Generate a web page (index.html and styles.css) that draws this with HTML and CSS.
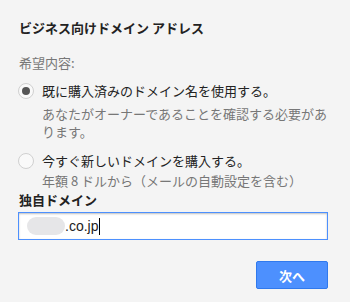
FILE: index.html
```html
<!DOCTYPE html>
<html lang="ja">
<head>
    <meta charset="UTF-8">
    <title>ビジネス向けドメイン アドレス</title>
    <link rel="stylesheet" href="styles.css">
</head>
<body>
    <div class="dialog">
        <h1 class="title">ビジネス向けドメイン アドレス</h1>
        <p class="label">希望内容:</p>
        <label class="option">
            <span class="radio checked"></span>
            <span>既に購入済みのドメイン名を使用する。</span>
        </label>
        <p class="hint">あなたがオーナーであることを確認する必要があります。</p>
        <label class="option">
            <span class="radio"></span>
            <span>今すぐ新しいドメインを購入する。</span>
        </label>
        <p class="hint last">年額 8 ドルから（メールの自動設定を含む）</p>
        <div class="field-label">独自ドメイン</div>
        <div class="input">
            <span class="blur"></span><span>.co.jp</span><span class="caret"></span>
        </div>
        <div class="actions">
            <button type="button">次へ</button>
        </div>
    </div>
</body>
</html>
```

FILE: styles.css
```css
body {
    margin: 0;
    background-color: #f4f4f4;
    font-family: "Noto Sans CJK JP", "Noto Sans", sans-serif;
    font-size: 13px;
    color: #222;
}
.dialog {
    padding: 19px 22px 0 18px;
}
.title {
    font-size: 13px;
    font-weight: bold;
    margin: 0 0 17px 1px;
    line-height: 18px;
}
.label {
    margin: 0 0 10px 1px;
    color: #777;
    line-height: 18px;
}
.option {
    display: flex;
    align-items: center;
    gap: 8px;
    line-height: 18px;
}
.radio {
    width: 14px;
    height: 14px;
    border: 1px solid #d0d0d0;
    border-radius: 50%;
    background-color: #f9f9f9;
    display: flex;
    align-items: center;
    justify-content: center;
}
.radio.checked::after {
    content: "";
    width: 8px;
    height: 8px;
    border-radius: 50%;
    background-color: #555;
}
.hint {
    margin: 5px 0 11px 24px;
    color: #777;
    line-height: 18px;
}
.hint.last {
    margin-top: 2px;
}
.field-label {
    font-weight: bold;
    line-height: 18px;
    margin: -10px 0 3px 1px;
}
.input {
    height: 26px;
    border: 1px solid #4d90fe;
    background-color: #fff;
    box-shadow: inset 0 1px 2px rgba(0,0,0,0.25);
    display: flex;
    align-items: center;
    padding-left: 8px;
    font-family: "Liberation Sans", Arial, sans-serif;
    font-size: 14px;
}
.blur {
    width: 38px;
    height: 18px;
    background-color: #e6e6e8;
    border-radius: 9px;
}
.caret {
    width: 1px;
    height: 17px;
    background-color: #000;
    margin-left: 1px;
}
.actions {
    display: flex;
    justify-content: flex-end;
    margin-top: 21px;
}
button {
    width: 72px;
    height: 28px;
    background-color: #4d90fe;
    border: 1px solid #3079ed;
    border-radius: 2px;
    color: #fff;
    font-family: "Noto Sans CJK JP", sans-serif;
    font-size: 13px;
    font-weight: bold;
}
```
